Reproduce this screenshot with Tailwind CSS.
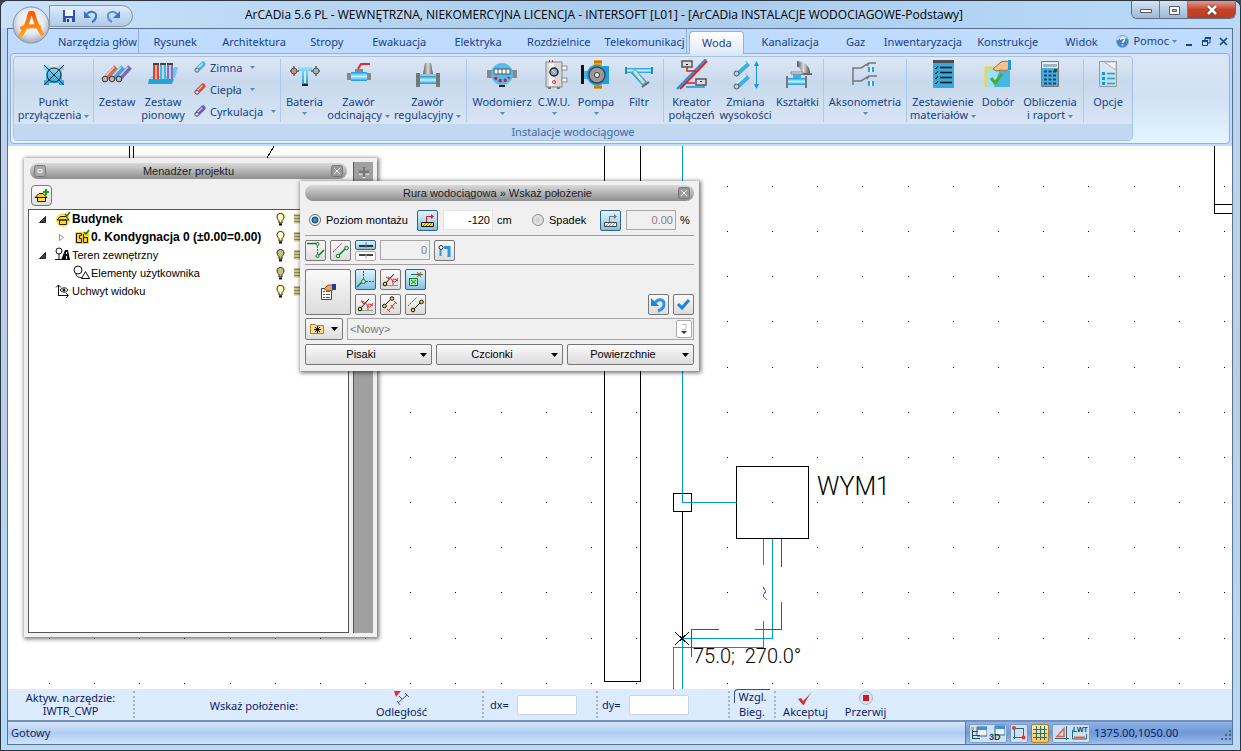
<!DOCTYPE html>
<html lang="pl">
<head>
  <meta charset="UTF-8">
  <meta name="viewport" content="width=device-width, initial-scale=1">
  <title>ArCADia 5.6 PL - ArCADia INSTALACJE WODOCIAGOWE</title>
  <script src="https://cdn.jsdelivr.net/npm/@tailwindcss/browser@4"></script>
</head>
<body class="h-screen overflow-hidden bg-[#3c4650] font-['Noto_Sans',sans-serif] text-[11px] leading-[13px] text-[#15428b]">

<!-- shared gradients and repeated icons -->
<svg class="absolute size-0" aria-hidden="true">
  <defs>
    <linearGradient id="gBlue" x1="0" y1="0" x2="0" y2="1"><stop offset="0" stop-color="#9be0fa"/><stop offset="1" stop-color="#18a0e0"/></linearGradient>
    <linearGradient id="gGray" x1="0" y1="0" x2="1" y2="0"><stop offset="0" stop-color="#555"/><stop offset=".5" stop-color="#ddd"/><stop offset="1" stop-color="#555"/></linearGradient>
    <linearGradient id="gPipe" x1="0" y1="0" x2="0" y2="1"><stop offset="0" stop-color="#109bdc"/><stop offset=".5" stop-color="#c6f0ff"/><stop offset="1" stop-color="#109bdc"/></linearGradient>
    <linearGradient id="gOrange" x1="0" y1="0" x2="0" y2="1"><stop offset="0" stop-color="#ff5a00"/><stop offset="1" stop-color="#ffa41c"/></linearGradient>
    <radialGradient id="gOrb" cx=".5" cy=".4" r=".6"><stop offset="0" stop-color="#fff"/><stop offset=".6" stop-color="#e4e8ee"/><stop offset="1" stop-color="#a5adb8"/></radialGradient>
    <symbol id="bulb" viewBox="0 0 12 14"><path d="M6 0a5 5 0 0 1 3 9v3H3V9a5 5 0 0 1 3-9Z" fill="#fdfaa8"/><path d="M4 8.500C1 6 1.500 1.500 5.500 1.500S10 6 7 8.500V11H4Z" fill="#ffffe0" stroke="#222"/><path d="M4 12.500h3" stroke="#111" stroke-width="2"/></symbol>
    <symbol id="bulbOff" viewBox="0 0 12 14"><path d="M4 8.500C1 6 1.500 1.500 5.500 1.500S10 6 7 8.500V11H4Z" fill="#c3c37c" stroke="#222"/><path d="M4 12.500h3" stroke="#111" stroke-width="2"/></symbol>
    <symbol id="layers" viewBox="0 0 14 10"><path d="M0 1.500h14M0 4.500h14M0 7.500h14" stroke="#8a8a45" stroke-width="2"/><path d="M0 3h14M0 6h14M0 9h14" stroke="#d0d090"/></symbol>
    <symbol id="pipe" viewBox="0 0 12 12"><path d="M3 9 9 3" stroke="currentColor" stroke-width="5" stroke-linecap="round"/><path d="M3 8 8.500 2.500" stroke="#fff" stroke-opacity=".65" stroke-width="1.500"/><ellipse cx="3" cy="9.200" rx="2" ry="1.800" fill="#d8d8e8" stroke="#556" stroke-width=".8"/></symbol>
  </defs>
</svg>

<div class="flex h-full flex-col overflow-hidden rounded-t-lg border border-[#2d3640] bg-linear-to-b from-[#bcd8f4] via-[#b8cfe8] to-[#b5dafa]">

  <!-- title bar -->
  <header class="relative flex h-[27px] shrink-0 items-stretch bg-linear-to-r from-[#c9e2fa] via-[#a9cbec] to-[#b9dafa]">
    <div class="mt-1 ml-12 flex h-[22px] w-[84px] items-center gap-2 rounded-r-full border border-[#8595aa] bg-linear-to-b from-[#dcecfc] to-[#b0cae6] pl-3">
      <button aria-label="Zapisz"><svg class="size-[14px]" viewBox="0 0 14 14"><path d="M1 1h12v12H1Z" fill="#2f52b0"/><path d="M3 1h8v6H3Z" fill="#f4f7ff"/><path d="M4 9h6v4H4Z" fill="#cdd8f0"/><path d="M5 10h2v3H5Z" fill="#223c80"/></svg></button>
      <button aria-label="Cofnij"><svg class="size-[14px]" viewBox="0 0 14 14"><path d="M3 5c4-4 10-2 9 3-.3 2-2 4-4 5" fill="none" stroke="#3c71cd" stroke-width="2"/><path d="M0 2v7h7Z" fill="#3c71cd"/></svg></button>
      <button aria-label="Ponów"><svg class="size-[14px]" viewBox="0 0 14 14"><path d="M11 5C7 1 1 3 2 8c.3 2 2 4 4 5" fill="none" stroke="#5d90e0" stroke-width="2"/><path d="M14 2v7H7Z" fill="#3c71cd"/></svg></button>
    </div>
    <h1 class="min-w-0 flex-1 overflow-hidden pr-14 text-center font-['Open_Sans',sans-serif] text-xs leading-7 whitespace-nowrap text-black">ArCADia 5.6 PL - WEWNĘTRZNA, NIEKOMERCYJNA LICENCJA - INTERSOFT [L01] - [ArCADia INSTALACJE WODOCIAGOWE-Podstawy]</h1>
    <div class="mr-1 flex h-[18px] w-[105px] overflow-hidden rounded-b-md border border-t-0 border-[#5b6c80]">
      <button aria-label="Minimalizuj" class="flex w-7 items-center justify-center border-r border-[#6c7d92] bg-linear-to-b from-[#d5e3f3] to-[#9eb9d6]"><svg class="h-2 w-4" viewBox="0 0 16 8"><path d="M2.500 3.500h11v3h-11Z" fill="#fff" stroke="#545c68"/></svg></button>
      <button aria-label="Przywróć" class="flex w-7 items-center justify-center border-r border-[#6c7d92] bg-linear-to-b from-[#d5e3f3] to-[#9eb9d6]"><svg class="h-3 w-4" viewBox="0 0 16 12"><path d="M3.500 2.500h10v8h-10Z" fill="#fff" stroke="#545c68"/><path d="M6.500 5.500h4v2h-4Z" fill="#a9c0da" stroke="#545c68"/></svg></button>
      <button aria-label="Zamknij" class="flex flex-1 items-center justify-center bg-linear-to-b from-[#e09a88] via-[#c6422a] to-[#b93c1e]"><svg class="h-3 w-4" viewBox="0 0 16 12"><path d="m4 2 8 8M12 2l-8 8" stroke="#6d3027" stroke-width="4"/><path d="m4 2 8 8M12 2l-8 8" stroke="#fff" stroke-width="2.500"/></svg></button>
    </div>
    <button aria-label="Menu aplikacji" class="absolute top-[5px] left-[11px] z-10">
      <svg class="size-[38px]" viewBox="0 0 38 38"><circle cx="19" cy="19" r="18" fill="url(#gOrb)" stroke="#8792a3"/><path d="M8.500 30C13 23 16 16 18 7l3 0c2 8 5 15 9 21M10 22c6-2 12-2 17-1" fill="none" stroke="url(#gOrange)" stroke-width="4" stroke-linecap="round" stroke-linejoin="round"/></svg>
    </button>
  </header>

  <div class="mr-[7px] mb-[5px] ml-[6px] flex min-h-0 flex-1 flex-col border border-[#5b7189] bg-[#bfdbff]">

    <!-- ribbon tabs -->
    <nav class="flex h-6 shrink-0 items-stretch pl-12 text-center leading-[26px] whitespace-nowrap">
      <a href="#" class="w-[83px] overflow-hidden border-r border-[#8db2e3] text-left indent-[2px]">Narzędzia głów</a>
      <a href="#" class="w-[73px]">Rysunek</a>
      <a href="#" class="w-[85px]">Architektura</a>
      <a href="#" class="w-[61px]">Stropy</a>
      <a href="#" class="w-[84px]">Ewakuacja</a>
      <a href="#" class="w-[74px]">Elektryka</a>
      <a href="#" class="w-[88px]">Rozdzielnice</a>
      <a href="#" class="w-[85px] overflow-hidden border-r border-[#8db2e3]">Telekomunikacj</a>
      <a href="#" class="relative z-10 mx-[2px] mt-[2px] -mb-px w-[55px] rounded-t border border-b-0 border-[#8db2e3] bg-linear-to-b from-white to-[#e0ebf8] leading-[22px]">Woda</a>
      <a href="#" class="w-[88px]">Kanalizacja</a>
      <a href="#" class="w-[43px]">Gaz</a>
      <a href="#" class="w-[92px]">Inwentaryzacja</a>
      <a href="#" class="w-[78px]">Konstrukcje</a>
      <a href="#" class="w-[70px]">Widok</a>
      <div class="ml-auto flex items-center gap-2 pr-1 leading-6">
        <button class="flex items-center gap-1"><svg class="size-[13px]" viewBox="0 0 13 13"><circle cx="6.500" cy="6.500" r="6" fill="#3d83cc" stroke="#8aa8c8"/><path d="M1.500 5a5 4 0 0 1 9-1.500" stroke="#cfe6fb" stroke-width="1.500" fill="none"/><path d="M4.500 5c0-3 4.500-2.500 4 0-.3 1.200-2 1.300-2 3M6.500 9v1.500" fill="none" stroke="#fff" stroke-width="1.500"/></svg>Pomoc<svg class="-ml-px h-[3px] w-[5px]" viewBox="0 0 5 3"><path d="M0 0h5L2.500 3Z" fill="#5c87c2"/></svg></button>
        <button aria-label="Minimalizuj rysunek"><svg class="size-[9px]" viewBox="0 0 9 9"><path d="M1 7h6v2H1Z" fill="#15428b"/></svg></button>
        <button aria-label="Przywróć rysunek"><svg class="size-[9px]" viewBox="0 0 9 9"><path d="M.5 3.500h5v5h-5ZM3 3V1h5v5H6" fill="none" stroke="#15428b"/><path d="M0 3h6v2H0ZM3 0h6v2H3Z" fill="#15428b"/></svg></button>
        <button aria-label="Zamknij rysunek"><svg class="size-[9px]" viewBox="0 0 9 9"><path d="m1 1 7 7M8 1 1 8" stroke="#15428b" stroke-width="1.600"/></svg></button>
      </div>
    </nav>

    <!-- ribbon -->
    <section class="mx-[2px] flex h-[91px] shrink-0 rounded border border-[#8db2e3] bg-linear-to-b from-[#dbe6f4] via-[#d0e2f5] to-[#e3f6ff] p-[2px]">
      <div class="flex flex-col rounded-sm border border-[#a5c3e6] bg-linear-to-b from-[#dee8f5] via-[#c8d9ed] via-30% to-[#dde9f7]">
        <div class="flex min-h-0 flex-1 items-stretch py-[2px] whitespace-nowrap">

          <div class="flex w-20 justify-center border-r border-[#a9c9ef]">
            <button class="flex w-20 flex-col items-center gap-1">
              <svg class="size-8 shrink-0" viewBox="0 0 32 32"><path d="M6 6h5v2h10V6h5v5h-2v10h2v5h-5v-2H11v2H6v-5h2V11H6Z" fill="url(#gBlue)"/><path d="m6 6 20 20M26 6 6 26" stroke="#222"/><circle cx="16" cy="16" r="7" fill="none" stroke="#222"/></svg>
              <span>Punkt<br>przyłączenia <svg class="inline h-[3px] w-[5px] align-middle" viewBox="0 0 5 3"><path d="M0 0h5L2.500 3Z" fill="#5c87c2"/></svg></span>
            </button>
          </div>

          <div class="flex w-[187px] justify-start border-r border-[#a9c9ef]">
            <button class="flex w-[46px] flex-col items-center gap-1">
              <svg class="size-8 shrink-0" viewBox="0 0 32 32"><g stroke-width="5"><path d="M4 20 15 8" stroke="#d96c50"/><path d="m11 20 11-12" stroke="#4ea2d2"/><path d="M18 20 29 8" stroke="#7568b8"/></g><g stroke="#fff" stroke-opacity=".6" stroke-width="1.500"><path d="m4 18 9-10M11 18l9-10M18 18l9-10"/></g><g fill="#bbb" stroke="#333"><circle cx="4" cy="20" r="2.800"/><circle cx="11" cy="20" r="2.800"/><circle cx="18" cy="20" r="2.800"/></g></svg>
              <span>Zestaw</span>
            </button>
            <button class="flex w-[46px] flex-col items-center gap-1">
              <svg class="size-8 shrink-0" viewBox="0 0 32 32"><path d="M3 19h25l3-11h-4l-3 9H6Z" fill="#6ec8ec"/><path d="M2 20h25l-2 5H1Z" fill="#21a3dc"/><path d="M6 5h6v15H6Z" fill="#d8452e"/><path d="M13 5h6v15h-6Z" fill="#4ab4e4"/><path d="M20 5h6v15h-6Z" fill="#8273c0"/><path d="M8 6h2v14H8ZM15 6h2v14h-2ZM22 6h2v14h-2Z" fill="#fff" fill-opacity=".55"/><path d="M6 5h6M13 5h6M20 5h6" stroke="#444" stroke-width="2"/></svg>
              <span>Zestaw<br>pionowy</span>
            </button>
            <div class="flex flex-col pt-[2px] pl-2">
              <button class="flex h-[22px] shrink-0 items-start gap-1"><svg class="size-3 text-[#49b6e8]"><use href="#pipe"/></svg>Zimna <svg class="mt-[5px] ml-1 h-[3px] w-[5px]" viewBox="0 0 5 3"><path d="M0 0h5L2.500 3Z" fill="#5c87c2"/></svg></button>
              <button class="flex h-[22px] shrink-0 items-start gap-1"><svg class="size-3 text-[#e3452d]"><use href="#pipe"/></svg>Ciepła <svg class="mt-[5px] ml-1 h-[3px] w-[5px]" viewBox="0 0 5 3"><path d="M0 0h5L2.500 3Z" fill="#5c87c2"/></svg></button>
              <button class="flex items-start gap-1"><svg class="size-3 text-[#6858b8]"><use href="#pipe"/></svg>Cyrkulacja <svg class="mt-[5px] ml-1 h-[3px] w-[5px]" viewBox="0 0 5 3"><path d="M0 0h5L2.500 3Z" fill="#5c87c2"/></svg></button>
            </div>
          </div>

          <div class="flex w-[186px] justify-center border-r border-[#a9c9ef]">
            <button class="flex w-11 flex-col items-center gap-1">
              <svg class="size-8 shrink-0" viewBox="0 0 32 32"><path d="M9 8h14v4h-4v13h-6V12H9Z" fill="url(#gBlue)"/><path d="M15 12h2v12h-2Z" fill="#c6f0ff"/><path d="M13 25h6v2h-6Z" fill="#222"/><path d="M1 12h9M22 12h9M5 7v10M27 7v10" stroke="#777" stroke-width="2"/><circle cx="5" cy="12" r="3" fill="#c98f78" stroke="#555"/><circle cx="27" cy="12" r="3" fill="#9fb3c4" stroke="#555"/></svg>
              <span>Bateria</span>
              <svg class="h-[3px] w-[5px]" viewBox="0 0 5 3"><path d="M0 0h5L2.500 3Z" fill="#5c87c2"/></svg>
            </button>
            <button class="flex w-16 flex-col items-center gap-1">
              <svg class="size-8 shrink-0" viewBox="0 0 32 32"><path d="M8 13h16v9H8Z" fill="url(#gPipe)"/><path d="M4 14h4v7H4ZM24 14h4v7h-4Z" fill="#888"/><path d="M12 10h8v3h-8Z" fill="#888"/><path d="M15 10 18 5h9" fill="none" stroke="#ee2430" stroke-width="2"/></svg>
              <span>Zawór<br>odcinający <svg class="inline h-[3px] w-[5px] align-middle" viewBox="0 0 5 3"><path d="M0 0h5L2.500 3Z" fill="#5c87c2"/></svg></span>
            </button>
            <button class="flex w-[74px] flex-col items-center gap-1">
              <svg class="size-8 shrink-0" viewBox="0 0 32 32"><path d="M13 4h6l2 11H11Z" fill="url(#gGray)"/><path d="M6 17h20v8H6Z" fill="url(#gPipe)"/><path d="M4 14h4v14H4ZM24 14h4v14h-4Z" fill="#777"/><path d="M8 15h16v2H8Z" fill="#bbb"/></svg>
              <span>Zawór<br>regulacyjny <svg class="inline h-[3px] w-[5px] align-middle" viewBox="0 0 5 3"><path d="M0 0h5L2.500 3Z" fill="#5c87c2"/></svg></span>
            </button>
          </div>

          <div class="flex w-[197px] justify-center border-r border-[#a9c9ef]">
            <button class="flex w-16 flex-col items-center gap-1">
              <svg class="size-8 shrink-0" viewBox="0 0 32 32"><path d="M1 11h5v8H1ZM26 11h5v8h-5Z" fill="#888"/><circle cx="16" cy="15" r="11" fill="#55bdf0"/><path d="M8 10h16v5H8Z" fill="#fff" stroke="#555"/><path d="M12 10v5M16 10v5M20 10v5" stroke="#555"/><path d="M9 18c2 5 12 5 14 0" fill="none" stroke="#e01822" stroke-width="3" stroke-dasharray="3 2"/><path d="M13 26h6v2h-6Z" fill="#222"/></svg>
              <span>Wodomierz</span>
              <svg class="h-[3px] w-[5px]" viewBox="0 0 5 3"><path d="M0 0h5L2.500 3Z" fill="#5c87c2"/></svg>
            </button>
            <button class="flex w-10 flex-col items-center gap-1">
              <svg class="size-8 shrink-0" viewBox="0 0 32 32"><path d="M8 3h16v25H8Z" fill="#d8d8d8" stroke="#888"/><path d="M11 4h5v23h-5Z" fill="#f7f7f7"/><path d="M24 7h5v4h-5ZM24 19h5v4h-5Z" fill="#fff" stroke="#888"/><circle cx="16" cy="13" r="4" fill="#7fb3d0" stroke="#222" stroke-width="1.500"/><path d="m14 11 3 3" stroke="#fff"/><circle cx="16" cy="23" r="1.500" fill="none" stroke="#e22"/><path d="M11 1h1v2h-1ZM14 1h1v2h-1Z" fill="#e22"/><path d="M10 28h3v2h-3ZM19 28h3v2h-3Z" fill="#777"/></svg>
              <span>C.W.U.</span>
              <svg class="h-[3px] w-[5px]" viewBox="0 0 5 3"><path d="M0 0h5L2.500 3Z" fill="#5c87c2"/></svg>
            </button>
            <button class="flex w-11 flex-col items-center gap-1">
              <svg class="size-8 shrink-0" viewBox="0 0 32 32"><path d="M14 1h8v5h-8ZM14 26h8v4h-8Z" fill="#e8a020"/><path d="M14 3h8M14 28h8" stroke="#8b5a08"/><path d="M1 6h3v19H1Z" fill="#111"/><path d="M4 12h5v8H4Z" fill="#48b2e4"/><path d="M23 7h6v18h-6Z" fill="#1b9ee4"/><circle cx="17" cy="16" r="9.500" fill="#999" stroke="#1b9ee4" stroke-width="2"/><circle cx="17" cy="16" r="8" fill="none" stroke="#444" stroke-width="1.500"/><circle cx="17" cy="16" r="2.500" fill="#eee" stroke="#333"/></svg>
              <span>Pompa</span>
              <svg class="h-[3px] w-[5px]" viewBox="0 0 5 3"><path d="M0 0h5L2.500 3Z" fill="#5c87c2"/></svg>
            </button>
            <button class="flex w-[42px] flex-col items-center gap-1">
              <svg class="size-8 shrink-0" viewBox="0 0 32 32"><path d="M2 9h28v5H2Z" fill="url(#gPipe)"/><path d="M2 8h2v7H2ZM28 8h2v7h-2Z" fill="#1590cc"/><path d="m10 12 12 13" stroke="#31a9dd" stroke-width="6"/><path d="m11 12 10 12" stroke="#d8e0c0" stroke-width="3"/><path d="m19 28 7-5" stroke="#666" stroke-width="2"/></svg>
              <span>Filtr</span>
            </button>
          </div>

          <div class="flex w-40 justify-center border-r border-[#a9c9ef]">
            <button class="flex w-[50px] flex-col items-center gap-1">
              <svg class="size-8 shrink-0" viewBox="0 0 32 32"><path d="M1 30 30 0" stroke="#1595dc" stroke-width="2"/><path d="M4 30 31 2" stroke="#e02028" stroke-width="2"/><path d="M11 7v5h9M19 24h-9" fill="none" stroke="#e02028" stroke-width="1.500"/><path d="M10 28h18v-4" fill="none" stroke="#1595dc" stroke-width="1.500"/><path d="M6 2h10v6H6ZM20 20h10v6H20Z" fill="#ddd" stroke="#555" stroke-width="1.500"/><path d="M10 5h2v1h-2ZM24 22h2v1h-2Z" fill="#111"/></svg>
              <span>Kreator<br>połączeń</span>
            </button>
            <button class="flex w-[58px] flex-col items-center gap-1">
              <svg class="size-8 shrink-0" viewBox="0 0 32 32"><path d="M7 14 18 4M7 27l11-10" stroke="#42aee2" stroke-width="6"/><path d="M6 12 16 3M6 25l10-9" stroke="#d6f3ff" stroke-width="2"/><circle cx="6.500" cy="14.500" r="2.500" fill="#ccc" stroke="#456"/><circle cx="6.500" cy="27.500" r="2.500" fill="#ccc" stroke="#456"/><path d="M26.500 4v24" stroke="#1595e8"/><path d="m26.500 2-2.500 5h5ZM26.500 30l-2.500-5h5Z" fill="#1595e8"/></svg>
              <span>Zmiana<br>wysokości</span>
            </button>
            <button class="flex w-[46px] flex-col items-center gap-1">
              <svg class="size-8 shrink-0" viewBox="0 0 32 32"><path d="M15 2c8 1 13 5 13 12h-9c0-4-1-6-4-6Z" fill="url(#gGray)"/><path d="M17 14h13v2H17Z" fill="#666"/><path d="M6 19h18v7H6Z" fill="url(#gPipe)"/><path d="M11 14h8v5h-8Z" fill="#40b4e8"/><path d="M9 13h12v2H9Z" fill="#eee" stroke="#888"/><path d="M4 17h2v12H4ZM23 17h2v12h-2Z" fill="#777"/></svg>
              <span>Kształtki</span>
            </button>
          </div>

          <div class="flex w-[83px] justify-center border-r border-[#a9c9ef]">
            <button class="flex w-20 flex-col items-center gap-1">
              <svg class="size-8 shrink-0" viewBox="0 0 32 32"><path d="M4 26V9h8l8-5h7M4 22h8l8-5h8M20 4l-2 3M20 17l-2 3" fill="none" stroke="#777" stroke-width="1.500"/><path d="M19 8h6v5h-6ZM19 22h6v5h-6Z" fill="#24a4e6"/><path d="M21 8h2v5h-2ZM21 22h2v5h-2Z" fill="#e9f8ff"/></svg>
              <span>Aksonometria</span>
              <svg class="h-[3px] w-[5px]" viewBox="0 0 5 3"><path d="M0 0h5L2.500 3Z" fill="#5c87c2"/></svg>
            </button>
          </div>

          <div class="flex w-[177px] justify-center gap-[2px] border-r border-[#a9c9ef]">
            <button class="flex w-[66px] flex-col items-center gap-1">
              <svg class="size-8 shrink-0" viewBox="0 0 32 32"><path d="M6 2h21v27H6Z" fill="#36a8da"/><path d="M6 1h21v3H6Z" fill="#514b50"/><path d="M13 8.500h12M13 13.500h12M13 18.500h12M13 23.500h12" stroke="#111" stroke-width="1.500"/><path d="m8 9 1 1 2-3M8 14l1 1 2-3M8 19l1 1 2-3M8 24l1 1 2-3" fill="none" stroke="#111"/></svg>
              <span>Zestawienie<br>materiałów <svg class="inline h-[3px] w-[5px] align-middle" viewBox="0 0 5 3"><path d="M0 0h5L2.500 3Z" fill="#5c87c2"/></svg></span>
            </button>
            <button class="flex w-10 flex-col items-center gap-1">
              <svg class="size-8 shrink-0" viewBox="0 0 32 32"><path d="M3 8h25v20H3Z" fill="#9ee0f8"/><path d="M17 12h11v16H12Z" fill="#46b8e6"/><path d="M3.500 28V8.500H12" fill="none" stroke="#ffd21c" stroke-width="2"/><path d="m9 19 4 5 7-9" fill="none" stroke="#46ae36" stroke-width="3"/><path d="m11 10 8-7c3-1 6-1 8 0v8c-3 0-5 1-7 0l-6 1Z" fill="#f4c389" stroke="#a3632a"/><path d="M26 1h3v10h-3Z" fill="#1c9adf"/></svg>
              <span>Dobór</span>
            </button>
            <button class="flex w-[60px] flex-col items-center gap-1">
              <svg class="size-8 shrink-0" viewBox="0 0 32 32"><path d="M7.500 2.500h17v25h-17Z" fill="#44afe0" stroke="#777"/><path d="M8 3h16v6H8Z" fill="#e8eef4"/><path d="M9 5h14v3H9Z" fill="#a4b4bf"/><path d="M10 12.500h12M10 16.500h12M10 20.500h12M10 24.500h12" stroke="#15446e" stroke-width="2" stroke-dasharray="3 1.500"/><path d="M20 10h3v3h-3Z" fill="#742c2c"/></svg>
              <span>Obliczenia<br>i raport <svg class="inline h-[3px] w-[5px] align-middle" viewBox="0 0 5 3"><path d="M0 0h5L2.500 3Z" fill="#5c87c2"/></svg></span>
            </button>
          </div>

          <div class="flex w-12 justify-center">
            <button class="flex w-10 flex-col items-center gap-1">
              <svg class="size-8 shrink-0" viewBox="0 0 32 32"><path d="M7.500 2.500h17v25h-17Z" fill="#dbe6ec" stroke="#999"/><path d="M12 3h12v8Z" fill="#f8fafb" stroke="#aab"/><path d="M8 14h16v13H8Z" fill="#b4e2f2"/><path d="M10 13h3v3h-3ZM10 18h3v3h-3ZM10 23h3v3h-3Z" fill="#1594dc"/><path d="M15 14.500h8M15 19.500h8M15 24.500h8" stroke="#3c98b6" stroke-width="1.500"/></svg>
              <span>Opcje</span>
            </button>
          </div>
        </div>
        <div class="h-4 bg-[#c2d8f0] text-center leading-4 text-[#3e6aaa]">Instalacje wodociągowe</div>
      </div>
    </section>

    <!-- drawing area -->
    <main class="relative mt-[2px] min-h-0 flex-1 overflow-hidden bg-white">
      <svg class="absolute inset-0 size-full" shape-rendering="crispEdges" fill="none" aria-label="Rysunek">
        <path id="grid" stroke="#000"/>
        <g stroke="#000">
          <path d="M121.500 0v12M125.500 0v12M266 0l-7 12M596.500 0v535.500h36V0M1206.500 0v67h24M1206.500 58h24"/>
          <path d="M728.500 320.500h72v72h-72ZM665.500 347.500h18v18h-18ZM674.500 366v126"/>
        </g>
        <path d="M674.500 0v356.500h54M764.500 393v99.500h-90v51" stroke="#0099cc"/>
        <path d="M755.500 393v26M755.500 475v26.500h-90v42" stroke="#994c99"/>
        <path d="m755 441 3 4-3 5 4 4" stroke="#994c99"/>
        <path d="M773.500 393v28M773.500 456v27.500h-27M711 483.500h-27.500v27" stroke="#e81010"/>
        <path d="m667 486 14 13M681 486l-14 13" stroke="#000"/>
        <g shape-rendering="auto" fill="#000" class="font-['Roboto',sans-serif] font-light">
          <text x="809" y="349" class="text-[25px]">WYM1</text>
          <text x="685" y="517" class="text-xl" xml:space="preserve">75.0;  270.0°</text>
        </g>
      </svg>

      <!-- project manager -->
      <aside class="absolute top-3 left-4 flex h-[479px] w-[353px] gap-1 bg-[#f0f0f0] p-1 font-['Liberation_Sans',sans-serif] text-[11px] text-black shadow-[1px_1px_4px_1px_rgba(0,0,0,0.55)]">
        <div class="flex min-w-0 flex-1 flex-col">
          <div class="mx-[2px] mt-px flex h-4 items-center rounded-lg bg-linear-to-b from-[#dadada] via-[#b4b4b4] to-[#8e8e8e] px-1">
            <button aria-label="Zwiń"><svg class="size-3" viewBox="0 0 12 12"><rect x=".5" y=".5" width="11" height="11" rx="2" fill="#aaa" stroke="#777"/><path d="M4 4.500h4v3H4Z" fill="#bbb" stroke="#eee"/></svg></button>
            <h2 class="flex-1 text-center text-[#222]">Menadżer projektu</h2>
            <button aria-label="Zamknij panel"><svg class="size-3" viewBox="0 0 12 12"><rect x=".5" y=".5" width="11" height="11" rx="2" fill="#999" stroke="#777"/><path d="m3 3 6 6M9 3 3 9" stroke="#fff"/></svg></button>
          </div>
          <button aria-label="Dodaj budynek" class="mt-[6px] mb-[3px] ml-[3px] flex size-[21px] items-center justify-center rounded-sm border border-[#777] bg-linear-to-b from-white to-[#ddd]"><svg class="size-4" viewBox="0 0 16 16"><path d="M3.500 9h8v4.500h-8Z" fill="#ffe030" stroke="#111"/><path d="M1 9.500 5 5.500h4l4 4Z" fill="#ffd010" stroke="#111"/><path d="M12 1v6M9 4h6" stroke="#1c9a1c" stroke-width="2"/></svg></button>
          <ul class="min-h-0 flex-1 border border-[#555] bg-white leading-[18px] whitespace-nowrap">
            <li class="flex h-[18px] items-center overflow-hidden pl-[10px] text-xs leading-[18px] font-bold">
              <svg class="mr-[9px] size-[7px]" viewBox="0 0 7 7"><path d="M6.500.5v6h-6Z" fill="#444" stroke="#222"/></svg>
              <svg class="size-4" viewBox="0 0 16 16"><circle cx="8" cy="9" r="7" fill="#ffe640"/><path d="M4.500 9h7v4.500h-7ZM2 9l3-3.500h6L14 9Z" fill="#ffd820" stroke="#222"/><path d="m10 3 2 2 3-4" fill="none" stroke="#1c7a1c" stroke-width="1.500"/></svg>
              <span class="flex-1 pl-px">Budynek</span>
              <svg class="mr-[7px] h-[14px] w-3"><use href="#bulb"/></svg><svg class="mr-10 h-[10px] w-[14px]"><use href="#layers"/></svg>
            </li>
            <li class="flex h-[18px] items-center overflow-hidden pl-[29px] text-xs leading-[18px] font-bold">
              <svg class="mr-[9px] size-[7px]" viewBox="0 0 7 7"><path d="m1.500.5 4 3-4 3Z" fill="#fff" stroke="#999"/></svg>
              <svg class="size-4" viewBox="0 0 16 16"><path d="M1 3h14v12H1Z" fill="#ffd820"/><path d="M2.500 4.500h5v2h-2v3h2v4h-5ZM9.500 8.500h4v5h-4ZM9.500 5v3" fill="none" stroke="#111"/><path d="m10 3 2 2 3-4" fill="none" stroke="#1c7a1c" stroke-width="1.500"/></svg>
              <span class="flex-1 pl-px">0. Kondygnacja 0 (±0.00=0.00)</span>
              <svg class="mr-[7px] h-[14px] w-3"><use href="#bulb"/></svg><svg class="mr-10 h-[10px] w-[14px]"><use href="#layers"/></svg>
            </li>
            <li class="flex h-[18px] items-center overflow-hidden pl-[10px]">
              <svg class="mr-[9px] size-[7px]" viewBox="0 0 7 7"><path d="M6.500.5v6h-6Z" fill="#444" stroke="#222"/></svg>
              <svg class="size-4" viewBox="0 0 16 16"><circle cx="4" cy="4" r="3" fill="none" stroke="#111"/><path d="M4 7v5M0 12.500h6" stroke="#111"/><path d="m6 13 4-10h3l2 10Z" fill="#111"/><path d="M11.500 5v2m0 2v3" stroke="#fff"/></svg>
              <span class="flex-1 pl-px">Teren zewnętrzny</span>
              <svg class="mr-[7px] h-[14px] w-3"><use href="#bulbOff"/></svg><svg class="mr-10 h-[10px] w-[14px]"><use href="#layers"/></svg>
            </li>
            <li class="flex h-[18px] items-center overflow-hidden pl-11">
              <svg class="h-4 w-[17px]" viewBox="0 0 17 16"><circle cx="5" cy="5" r="4" fill="none" stroke="#111"/><path d="M3 9c0 3 3 3 6 4M8.500 13.500l4-7 4 7Z" fill="none" stroke="#111"/></svg>
              <span class="flex-1 pl-px">Elementy użytkownika</span>
              <svg class="mr-[7px] h-[14px] w-3"><use href="#bulbOff"/></svg><svg class="mr-10 h-[10px] w-[14px]"><use href="#layers"/></svg>
            </li>
            <li class="flex h-[18px] items-center overflow-hidden pl-[26px]">
              <svg class="size-4" viewBox="0 0 16 16"><path d="M3.500 13V2M1 4.500 3.500 2 6 4.500M3 12.500h10M11 10l2.500 2.500L11 15" fill="none" stroke="#111"/><path d="M5 7c3-3 6-3 8 0-2 3-5 3-8 0Z" fill="none" stroke="#111"/><circle cx="9" cy="7" r="1.500" fill="#111"/></svg>
              <span class="flex-1 pl-px">Uchwyt widoku</span>
              <svg class="mr-[7px] h-[14px] w-3"><use href="#bulb"/></svg><svg class="mr-10 h-[10px] w-[14px]"><use href="#layers"/></svg>
            </li>
          </ul>
        </div>
        <div class="w-5 border-l border-[#555] bg-[#a0a0a0]">
          <button aria-label="Dodaj" class="flex h-5 w-full items-center justify-center"><svg class="size-3" viewBox="0 0 12 12"><path d="M6 2v10M1 7h10" stroke="#fff" stroke-width="3"/><path d="M6 1v10M1 6h10" stroke="#777" stroke-width="3"/></svg></button>
        </div>
      </aside>

      <!-- pipe options dialog -->
      <form class="absolute top-[35px] left-[292px] w-[399px] bg-[#f0f0f0] px-[5px] pt-1 pb-[6px] font-['Liberation_Sans',sans-serif] text-[11px] text-black shadow-[1px_1px_4px_1px_rgba(0,0,0,0.55)]">
        <div class="flex h-4 items-center rounded-lg bg-linear-to-b from-[#dadada] via-[#b4b4b4] to-[#8e8e8e] pr-1 pl-3">
          <h2 class="flex-1 text-center text-[#222]">Rura wodociągowa » Wskaż położenie</h2>
          <button type="button" aria-label="Zamknij okno"><svg class="size-3" viewBox="0 0 12 12"><rect x=".5" y=".5" width="11" height="11" rx="2" fill="#999" stroke="#777"/><path d="m3 3 6 6M9 3 3 9" stroke="#fff"/></svg></button>
        </div>

        <div class="mt-2 flex h-[22px] items-center">
          <input type="radio" name="mode" id="level" checked class="ml-1 size-3 appearance-none rounded-full border border-[#666] bg-[radial-gradient(circle,#4cc0ee_0,#164a7c_3px,#fff_4px)]">
          <label for="level" class="w-[96px] pl-[5px]">Poziom montażu</label>
          <button type="button" aria-label="Wysokość" class="flex size-[21px] items-center justify-center rounded-xs border border-[#2c628b] bg-linear-to-b from-[#e2f3fc] to-[#84c2e6]"><svg class="size-[17px]" viewBox="0 0 17 17"><path d="M2.500 10.500h12v4h-12Z" fill="#ffd820" stroke="#111"/><path d="m4 14 3-3m0 3 3-3m0 3 3-3" stroke="#b08000"/><path d="M7.500 10V4.500H13" fill="none" stroke="#e01818"/><path d="m12 2 3 2.500L12 7Z" fill="#e01818"/></svg></button>
          <input aria-label="Poziom montażu w cm" value="-120" class="ml-[5px] h-5 w-[50px] border border-[#e3e3e3] bg-white pr-[2px] text-right">
          <span class="ml-1 w-[35px]">cm</span>
          <input type="radio" name="mode" id="slope" class="size-3 appearance-none rounded-full border border-[#888] bg-[radial-gradient(circle,#ccc,#f4f4f4)]">
          <label for="slope" class="w-14 pl-[5px]">Spadek</label>
          <button type="button" aria-label="Spadek rury" class="flex size-[21px] items-center justify-center rounded-xs border border-[#2c628b] bg-linear-to-b from-[#e2f3fc] to-[#84c2e6]"><svg class="size-[17px]" viewBox="0 0 17 17"><path d="M2.500 10.500h12v4h-12Z" fill="#fff" stroke="#444"/><path d="m4 14 3-3m0 3 3-3m0 3 3-3" stroke="#999"/><path d="M7.500 10V4.500H13" fill="none" stroke="#777"/><path d="m12 2 3 2.500L12 7Z" fill="#777"/></svg></button>
          <input aria-label="Spadek w procentach" value="0.00" disabled class="ml-[5px] h-5 w-[50px] border border-[#a8a8a8] bg-[#f0f0f0] pr-[2px] text-right text-[#808080]">
          <span class="ml-1">%</span>
        </div>

        <div class="mt-1 flex h-[30px] items-center gap-1 border-y border-[#a0a0a0]">
          <button type="button" aria-label="Pion" class="flex size-[21px] items-center justify-center rounded-xs border border-[#777] bg-linear-to-b from-[#fafafa] to-[#dcdcdc]"><svg class="size-[19px]" viewBox="0 0 19 19"><path d="M1 2.500h10M13 14l5-5" stroke="#107830" stroke-width="1.500"/><path d="M11.500 5v8" stroke="#d22" stroke-dasharray="2 1"/><circle cx="11.500" cy="3" r="1.500" fill="#dfd" stroke="#107830"/><circle cx="11.500" cy="15" r="1.500" fill="#dfd" stroke="#107830"/></svg></button>
          <button type="button" aria-label="Odcinek równoległy" class="flex size-[21px] items-center justify-center rounded-xs border border-[#777] bg-linear-to-b from-[#fafafa] to-[#dcdcdc]"><svg class="size-[19px]" viewBox="0 0 19 19"><path d="m2 11 9-9" stroke="#d22" stroke-dasharray="2 1"/><path d="m7 15 8-8" stroke="#107830" stroke-width="1.500"/><circle cx="7" cy="15" r="1.800" fill="#bfb" stroke="#107830"/><circle cx="15.500" cy="7" r="1.800" fill="#bfb" stroke="#107830"/></svg></button>
          <div class="flex flex-col gap-px">
            <button type="button" aria-label="Kondygnacja w górę" class="flex h-[10px] w-[21px] items-center justify-center rounded-xs border border-[#2c628b] bg-linear-to-b from-[#e2f3fc] to-[#84c2e6]"><svg class="h-2 w-4" viewBox="0 0 16 8"><path d="M1 5h14" stroke="#333" stroke-width="2"/><path d="M8 1v6" stroke="#777"/></svg></button>
            <button type="button" aria-label="Kondygnacja w dół" class="flex h-[10px] w-[21px] items-center justify-center rounded-xs border border-[#aaa] bg-white"><svg class="h-2 w-4" viewBox="0 0 16 8"><path d="M1 3h14" stroke="#444" stroke-width="2"/><path d="M8 2v5" stroke="#aaa"/></svg></button>
          </div>
          <input aria-label="Odsunięcie" value="0" disabled class="h-5 w-[50px] border border-[#a8a8a8] bg-[#f0f0f0] pr-[2px] text-right text-[#808080]">
          <button type="button" aria-label="Podłącz" class="flex size-[21px] items-center justify-center rounded-xs border border-[#777] bg-linear-to-b from-[#fafafa] to-[#dcdcdc]"><svg class="size-[19px]" viewBox="0 0 19 19"><path d="M5.500 9v6" stroke="#2d94ea" stroke-width="2"/><path d="M9 6.500h5V16" fill="none" stroke="#2d94ea" stroke-width="3"/><circle cx="6" cy="6.500" r="2" fill="#fff" stroke="#222"/></svg></button>
        </div>

        <div class="mt-1 flex items-end gap-1">
          <button type="button" aria-label="Właściwości" class="flex h-[46px] w-[46px] items-center justify-center rounded-xs border border-[#777] bg-linear-to-b from-[#fafafa] to-[#dcdcdc]"><svg class="size-4" viewBox="0 0 16 16"><path d="M1.500 4.500h10v11h-10Z" fill="#fff" stroke="#444"/><path d="M3 7.500h2m1 0h4M3 10.500h2m1 0h4M3 13.500h2m1 0h4" stroke="#555"/><path d="m4 5 4-4h5v5L8 7Z" fill="#e9a860" stroke="#935b28"/><path d="M12 0h4v6h-4Z" fill="#1e3c9c"/></svg></button>
          <div class="grid grid-cols-3 gap-1">
            <button type="button" aria-label="Ortogonalnie" class="flex size-[21px] items-center justify-center rounded-xs border border-[#2c628b] bg-linear-to-b from-[#e2f3fc] to-[#84c2e6]"><svg class="size-[19px]" viewBox="0 0 19 19"><path d="M7.500 1v10M7 11.500h11" stroke="#d22" stroke-dasharray="2 1"/><path d="m1 17 6-6" stroke="#107830" stroke-width="1.500"/><circle cx="7.500" cy="11.500" r="2" fill="#bfb" stroke="#107830"/></svg></button>
            <button type="button" aria-label="Kąt" class="flex size-[21px] items-center justify-center rounded-xs border border-[#777] bg-linear-to-b from-[#fafafa] to-[#dcdcdc]"><svg class="size-[19px]" viewBox="0 0 19 19"><path d="M2 15.500h15" stroke="#999"/><path d="m3 15 10-11" stroke="#111"/><path d="M7 7c4 1 5 4 5 8M5 7l3 2M17 8c-2 4-4 5-5 3s2-3 5 0" fill="none" stroke="#d22"/><circle cx="4" cy="14" r="1.800" fill="#ffe020" stroke="#111"/></svg></button>
            <button type="button" aria-label="Przecięcie" class="flex size-[21px] items-center justify-center rounded-xs border border-[#2c628b] bg-linear-to-b from-[#e2f3fc] to-[#84c2e6]"><svg class="size-[19px]" viewBox="0 0 19 19"><path d="M3.500 8.500h8v7h-8Z" fill="#b7efb7" stroke="#107830"/><path d="m5 10 5 4m0-4-5 4" stroke="#107830"/><path d="M5 4.500h12" stroke="#107830"/><path d="m11 2 4 5m0-5-4 5" stroke="#d22"/></svg></button>
            <button type="button" aria-label="Kąt względny" class="flex size-[21px] items-center justify-center rounded-xs border border-[#777] bg-linear-to-b from-[#fafafa] to-[#dcdcdc]"><svg class="size-[19px]" viewBox="0 0 19 19"><path d="M2 15.500h15" stroke="#999"/><path d="m3 15 10-11" stroke="#111"/><path d="M5 6c5 1 7 4 7 9M5 6l3 3M17 8c-2 4-4 5-5 3s2-3 5 0" fill="none" stroke="#d22"/><circle cx="4" cy="14" r="1.800" fill="#ffe020" stroke="#111"/></svg></button>
            <button type="button" aria-label="Długość" class="flex size-[21px] items-center justify-center rounded-xs border border-[#777] bg-linear-to-b from-[#fafafa] to-[#dcdcdc]"><svg class="size-[19px]" viewBox="0 0 19 19"><path d="m3 11 8-8" stroke="#111"/><path d="m7 16 8-9M6 14l3 3M13 6l3 3M10 10l3 4" stroke="#d22"/><circle cx="3.500" cy="11" r="1.800" fill="#ffe020" stroke="#111"/><circle cx="11" cy="3.500" r="1.800" fill="#ffe020" stroke="#111"/></svg></button>
            <button type="button" aria-label="Równolegle" class="flex size-[21px] items-center justify-center rounded-xs border border-[#777] bg-linear-to-b from-[#fafafa] to-[#dcdcdc]"><svg class="size-[19px]" viewBox="0 0 19 19"><path d="m2 11 9-9" stroke="#d22" stroke-dasharray="2 1"/><path d="m7 15 8-8" stroke="#111"/><circle cx="7" cy="15" r="1.800" fill="#ffe020" stroke="#111"/><circle cx="15.500" cy="7" r="1.800" fill="#ffe020" stroke="#111"/></svg></button>
          </div>
          <button type="button" aria-label="Cofnij krok" class="ml-auto flex size-[21px] items-center justify-center rounded-xs border border-[#777] bg-linear-to-b from-[#fafafa] to-[#dcdcdc]"><svg class="size-[17px]" viewBox="0 0 17 17"><path d="M5 7c3-5 9-4 9 1 0 4-3 6-6 7" fill="none" stroke="#2d94ea" stroke-width="3"/><path d="M1 2v8h8Z" fill="#1c84e0"/></svg></button>
          <button type="button" aria-label="Zatwierdź" class="flex size-[21px] items-center justify-center rounded-xs border border-[#777] bg-linear-to-b from-[#fafafa] to-[#dcdcdc]"><svg class="size-[17px]" viewBox="0 0 17 17"><path d="m3 8 4 4 7-8" fill="none" stroke="#1c84e0" stroke-width="3"/></svg></button>
        </div>

        <div class="mt-[3px] flex h-[22px] items-stretch gap-1">
          <button type="button" aria-label="Szablony" class="flex w-[38px] items-center justify-center gap-[6px] rounded-xs border border-[#777] bg-linear-to-b from-[#fafafa] to-[#dcdcdc]"><svg class="h-3 w-[15px]" viewBox="0 0 15 12"><path d="M.5 10.500v-9h5l1 1h7v8Z" fill="#f6dc82" stroke="#a58430"/><path d="M7.500 3v7M4 6.500h7M5 4l5 5M10 4l-5 5" stroke="#111"/></svg><svg class="h-1 w-[7px]" viewBox="0 0 7 4"><path d="M0 0h7L3.500 4Z"/></svg></button>
          <div class="flex flex-1 items-center justify-between border border-[#a8a8a8] pr-px pl-[2px] text-[#777]"><span>&lt;Nowy&gt;</span><button type="button" aria-label="Wybierz szablon" class="flex h-[18px] w-4 items-center justify-center rounded-xs border border-[#aaa] bg-white"><svg class="h-3 w-2" viewBox="0 0 8 12"><path d="M2 1.500h4v5H2" fill="none" stroke="#bbb"/><path d="M1 8h6l-3 3Z" fill="#333"/></svg></button></div>
        </div>

        <div class="mt-1 grid grid-cols-3 gap-1">
          <button type="button" class="flex h-[21px] items-center rounded-xs border border-[#777] bg-linear-to-b from-[#fafafa] to-[#dcdcdc] pr-1"><span class="flex-1 pr-1">Pisaki</span><svg class="h-1 w-[7px]" viewBox="0 0 7 4"><path d="M0 0h7L3.500 4Z"/></svg></button>
          <button type="button" class="flex h-[21px] items-center rounded-xs border border-[#777] bg-linear-to-b from-[#fafafa] to-[#dcdcdc] pr-1"><span class="flex-1 pr-1">Czcionki</span><svg class="h-1 w-[7px]" viewBox="0 0 7 4"><path d="M0 0h7L3.500 4Z"/></svg></button>
          <button type="button" class="flex h-[21px] items-center rounded-xs border border-[#777] bg-linear-to-b from-[#fafafa] to-[#dcdcdc] pr-1"><span class="flex-1 pr-1">Powierzchnie</span><svg class="h-1 w-[7px]" viewBox="0 0 7 4"><path d="M0 0h7L3.500 4Z"/></svg></button>
        </div>
      </form>
    </main>

    <!-- command bar -->
    <section class="flex h-[31px] shrink-0 items-stretch bg-[#dcebfe] py-[2px] text-center text-[#0c1c66] [&>*]:shrink-0">
      <p class="w-[127px] border-r-2 border-dotted border-[#a9b4c4]">Aktyw. narzędzie:<br>IWTR_CWP</p>
      <p class="w-[238px] leading-[30px]">Wskaż położenie:</p>
      <button class="flex w-[111px] flex-col items-center border-r-2 border-dotted border-[#a9b4c4] pr-[52px]"><svg class="h-[14px] w-4" viewBox="0 0 16 14"><path d="M0 0h7L2 6Z" fill="#e03030"/><path d="m4 12 9-8M3 10l3 4M11 2l4 4M5 5l3 3" stroke="#555"/></svg>Odległość</button>
      <label class="flex w-[114px] items-center gap-2 border-r-2 border-dotted border-[#a9b4c4] pl-[6px]">dx=<input class="h-5 w-[60px] rounded-xs border border-[#c6d5e6] bg-white"></label>
      <label class="flex w-[132px] items-center gap-2 border-r-2 border-dotted border-[#a9b4c4] pl-1">dy=<input class="h-5 w-[60px] rounded-xs border border-[#c6d5e6] bg-white"></label>
      <div class="flex w-[46px] flex-col items-center justify-between border-r-2 border-dotted border-[#a9b4c4] px-1">
        <button class="-mt-[2px] w-9 rounded-tl border-t border-l border-[#2c4f93]">Wzgl.</button>
        <button>Bieg.</button>
      </div>
      <button class="flex w-[59px] flex-col items-center"><svg class="h-[14px] w-4" viewBox="0 0 16 14"><path d="m0 8 3-1 2 3 10-10c-4 4-7 9-9 14H5Z" fill="#d82c2c"/></svg>Akceptuj</button>
      <button class="flex w-[61px] flex-col items-center"><svg class="h-[14px] w-4" viewBox="0 0 16 14"><circle cx="8" cy="7" r="6.500" fill="#dbe3f2" stroke="#a9b6d2"/><path d="M5 4h6v6H5Z" fill="#cc1a1a"/></svg>Przerwij</button>
    </section>

    <!-- status bar -->
    <footer class="flex h-6 shrink-0 items-stretch border-t-2 border-[#7290bc] bg-linear-to-b from-[#d8e6f9] via-[#aecbf2] to-[#d3e4fa] leading-[22px] text-[#15285a]">
      <span class="flex-1 pl-[3px]">Gotowy</span>
      <div class="flex w-[267px] items-center gap-[3px] border-l border-[#567db1] bg-linear-to-b from-[#8fb3e6] via-[#6f98d6] to-[#9dbdec] pl-[3px]">
        <div class="flex h-[19px] w-[38px] items-center justify-around rounded-xs border border-[#7d9cc8] bg-[#cfdff4]">
          <button aria-label="Widok 2D"><svg class="size-4" viewBox="0 0 16 16"><path d="M6 2h10v9H6Z" fill="#eef4fb" stroke="#2e6595"/><path d="M6 2h10v3H6Z" fill="#3d90d8"/><path d="M1.500 2v12M2 6.500h5M2 10.500h7M2 13.500h7" stroke="#125454"/><path d="M0 2h3v3H0Z" fill="#f2a422"/></svg></button>
          <button aria-label="Widok 3D"><svg class="size-4" viewBox="0 0 16 16"><path d="M6 1h10v9H6Z" fill="#eef4fb" stroke="#2e6595"/><path d="M6 1h10v3H6Z" fill="#3d90d8"/><text x="0" y="15" fill="#0f4c4c" class="font-['Liberation_Sans',sans-serif] text-[9px] font-bold">3D</text></svg></button>
        </div>
        <button aria-label="Przyciąganie" class="flex h-[19px] w-[18px] items-center justify-center rounded-xs border border-[#7d9cc8] bg-[#cfdff4]"><svg class="size-4" viewBox="0 0 16 16"><path d="M3.500 2v12M2 3.500h11M2 12.500h12M12.500 4v9" stroke="#227272"/><circle cx="3" cy="3" r="2" fill="#e83828"/><circle cx="12.500" cy="12.500" r="2" fill="#e83828"/></svg></button>
        <button aria-label="Siatka" class="flex h-[19px] w-[18px] items-center justify-center rounded-xs border border-[#a88130] bg-linear-to-b from-[#fbe4b4] to-[#ffc050]"><svg class="size-4" viewBox="0 0 16 16"><path d="M4.500 1v14M8.500 1v14M12.500 1v14M1 4.500h14M1 8.500h14M1 12.500h14" stroke="#227272"/></svg></button>
        <div class="flex h-[19px] w-[38px] items-center justify-around rounded-xs border border-[#7d9cc8] bg-[#cfdff4]">
          <button aria-label="Orto"><svg class="size-4" viewBox="0 0 16 16"><path d="M3 11.500h7v-8Z" fill="none" stroke="#e46050" stroke-width="1.500"/><path d="M1 13.500h14M12.500 1v14" stroke="#227272"/></svg></button>
          <button aria-label="Grubość linii"><svg class="h-4 w-[18px]" viewBox="0 0 18 16"><path d="M1.500 5v9h14V9" fill="none" stroke="#227272"/><path d="M3 12.500h11" stroke="#e46050" stroke-width="2"/><text x="2" y="7" fill="#0f4c4c" class="font-['Liberation_Sans',sans-serif] text-[7px] font-bold">LWT</text></svg></button>
        </div>
        <output class="flex-1 pl-px text-[#0c1c66]">1375.00,1050.00</output>
        <svg class="mt-1 size-3" viewBox="0 0 12 12"><path d="M9 1h2v2H9ZM5 5h2v2H5ZM9 5h2v2H9ZM1 9h2v2H1ZM5 9h2v2H5ZM9 9h2v2H9Z" fill="#47658f"/></svg>
      </div>
    </footer>
  </div>
</div>

<script>
  // grid dots of the drawing, one pixel each
  const STEP = 45.2;
  let d = '';
  for (let y = -5; y < 1600; y += STEP) {
    for (let x = -4; x < 2600; x += STEP) {
      d += `M${Math.floor(x)} ${Math.floor(y) + 0.5}h1`;
    }
  }
  document.getElementById('grid').setAttribute('d', d);
</script>
</body>
</html>
